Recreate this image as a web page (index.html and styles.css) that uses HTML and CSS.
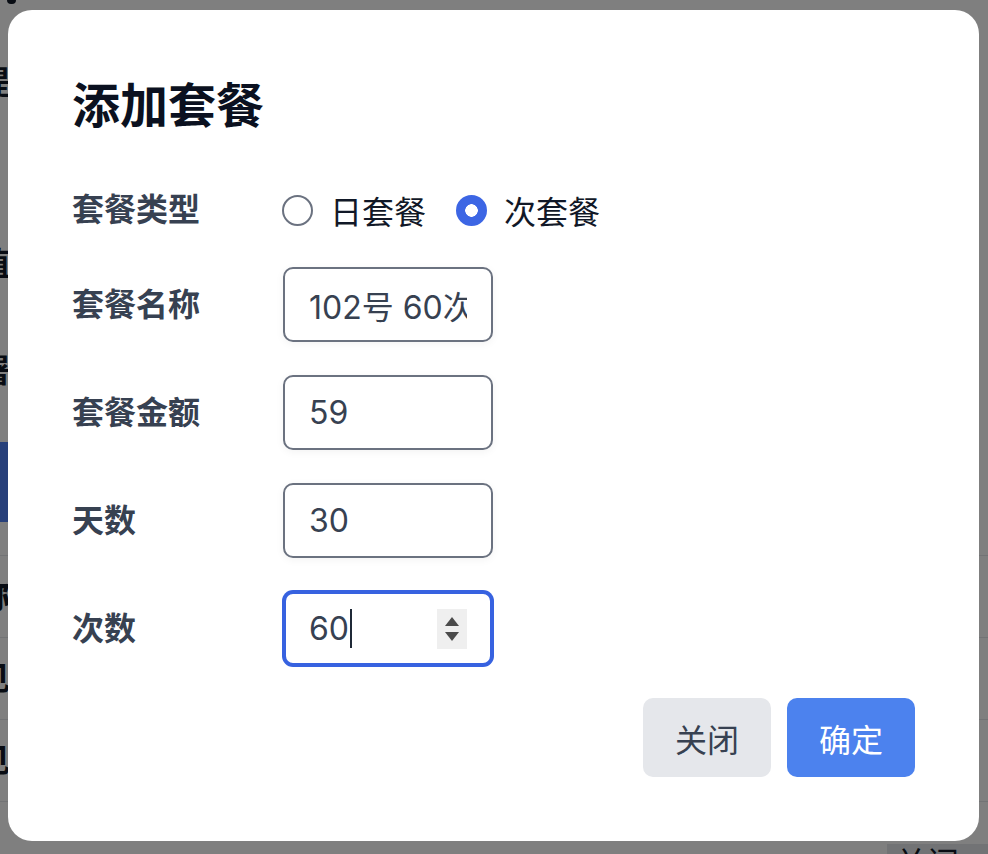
FILE: index.html
```html
<!DOCTYPE html>
<html lang="zh-CN">
<head>
    <meta charset="UTF-8">
    <meta name="viewport" content="width=device-width, initial-scale=1.0">
    <title>添加套餐</title>
    <link rel="stylesheet" href="styles.css">
</head>
<body>
    <!-- page behind the dialog, mostly covered -->
    <div class="page">
        <div class="top-mark"></div>
        <div class="side-text t1">提</div>
        <div class="side-text t2">值</div>
        <div class="side-text t3">署</div>
        <div class="side-btn"></div>
        <div class="table">
            <div class="table-row"><span class="side-text strong">称</span></div>
            <div class="table-row"><span class="side-text">见</span></div>
            <div class="table-row"><span class="side-text">见</span></div>
        </div>
        <div class="page-foot">
            <button class="page-close">关闭</button>
        </div>
    </div>

    <div class="overlay">
        <div class="modal">
            <h2>添加套餐</h2>
            <form id="packageForm" class="form">
                <label>套餐类型</label>
                <div class="radios">
                    <label class="radio"><input type="radio" name="type" value="day"><span>日套餐</span></label>
                    <label class="radio"><input type="radio" name="type" value="times" checked><span>次套餐</span></label>
                </div>

                <label for="name">套餐名称</label>
                <div class="field"><input type="text" id="name" value="102号 60次套餐"></div>

                <label for="amount">套餐金额</label>
                <div class="field"><input type="text" id="amount" value="59"></div>

                <label for="days">天数</label>
                <div class="field"><input type="text" id="days" value="30"></div>

                <label for="count">次数</label>
                <div class="field active">
                    <span class="value">60</span><span class="caret"></span>
                    <span class="spin">
                        <svg width="14" height="9" viewBox="0 0 14 9"><path d="M7 0 L14 9 L0 9 Z" fill="#4b4b4b"/></svg>
                        <svg width="14" height="9" viewBox="0 0 14 9"><path d="M0 0 L14 0 L7 9 Z" fill="#4b4b4b"/></svg>
                    </span>
                </div>
            </form>
            <div class="actions">
                <button type="button" class="btn btn-close">关闭</button>
                <button type="submit" form="packageForm" class="btn btn-ok">确定</button>
            </div>
        </div>
    </div>
</body>
</html>
```

FILE: styles.css
```css
body {
    margin: 0;
    font-family: Inter, "Noto Sans CJK SC", sans-serif;
    background: #fff;
    overflow: hidden;
}

/* background page */
.page {
    height: 854px;
    overflow: hidden;
}
.top-mark {
    width: 9px;
    height: 4px;
    margin-left: 7px;
    background: #111827;
    border-radius: 0 0 5px 5px;
}
.side-text {
    display: block;
    margin-left: -22px;
    font-size: 32px;
    line-height: 32px;
    font-weight: 700;
    color: #111827;
}
.t1 {
    margin-top: 63px;
}
.t2 {
    margin-top: 149px;
}
.t3 {
    margin-top: 75px;
}
.side-btn {
    margin-top: 55px;
    margin-left: -90px;
    width: 100px;
    height: 80px;
    background: #4e80f4;
}
.table {
    margin-top: 33px;
}
.table-row {
    height: 81px;
    border-top: 1px solid #e5e7eb;
    display: flex;
    align-items: center;
}
.table-row:last-child {
    border-bottom: 1px solid #e5e7eb;
}
.strong {
    font-weight: 800;
}
.page-foot {
    display: flex;
    justify-content: flex-end;
    margin-top: 42px;
}
.page-close {
    width: 101px;
    height: 40px;
    border: none;
    background: #e5e7eb;
    color: #111827;
    font-family: inherit;
    font-size: 32px;
    padding: 0 0 0 8px;
    text-align: left;
    line-height: 32px;
    overflow: hidden;
}

/* dialog */
.overlay {
    position: fixed;
    inset: 0;
    background: rgba(0, 0, 0, 0.5);
}
.modal {
    box-sizing: border-box;
    width: 971px;
    margin: 10px 0 0 8px;
    padding: 64px;
    background: #fff;
    border-radius: 24px;
}
.modal h2 {
    margin: 0 0 48px;
    font-size: 48px;
    line-height: 64px;
    font-weight: 700;
    color: #0b1120;
}
.form {
    display: grid;
    grid-template-columns: 211px 1fr;
    row-gap: 33px;
    align-items: center;
}
.form > label {
    font-size: 32px;
    line-height: 48px;
    font-weight: 600;
    color: #374151;
}
.radios {
    display: flex;
    align-items: center;
    height: 48px;
}
.radio {
    display: flex;
    align-items: center;
    gap: 17px;
    margin-right: 31px;
    font-size: 32px;
    color: #111827;
}
.radio input {
    appearance: none;
    margin: 0 0 0 -1px;
    width: 31px;
    height: 31px;
    border: 2px solid #6b7280;
    border-radius: 50%;
    background: #fff;
}
.radio input:checked {
    border-color: #3d66e4;
    background: radial-gradient(circle, #fff 6px, #3d66e4 6.5px);
}
.field {
    box-sizing: border-box;
    width: 210px;
    height: 75px;
    padding: 0 24px;
    display: flex;
    align-items: center;
    border: 2px solid #6b7280;
    border-radius: 10px;
    background: #fff;
    box-shadow: 0 2px 8px rgba(0, 0, 0, 0.05);
}
.field input {
    width: 100%;
    padding: 0;
    border: none;
    outline: none;
    background: transparent;
    font-family: inherit;
    font-size: 32px;
    color: #374151;
}
.field.active {
    border: 3px solid #3762e0;
    padding: 0 23px;
    box-shadow: 0 0 0 1px #3762e0;
}
.value {
    font-size: 32px;
    color: #374151;
}
.caret {
    width: 2px;
    height: 39px;
    margin-left: 1px;
    background: #1f2937;
}
.spin {
    margin-left: auto;
    width: 30px;
    height: 40px;
    background: #efefef;
    display: flex;
    flex-direction: column;
    align-items: center;
    justify-content: center;
    gap: 6px;
}
.spin svg {
    display: block;
}
.actions {
    display: flex;
    justify-content: flex-end;
    gap: 16px;
    margin-top: 32px;
}
.btn {
    width: 128px;
    height: 79px;
    border: none;
    border-radius: 10px;
    font-family: inherit;
    font-size: 32px;
    cursor: pointer;
}
.btn-close {
    background: #e5e7eb;
    color: #374151;
}
.btn-ok {
    background: #4c82ee;
    color: #fff;
}
```
